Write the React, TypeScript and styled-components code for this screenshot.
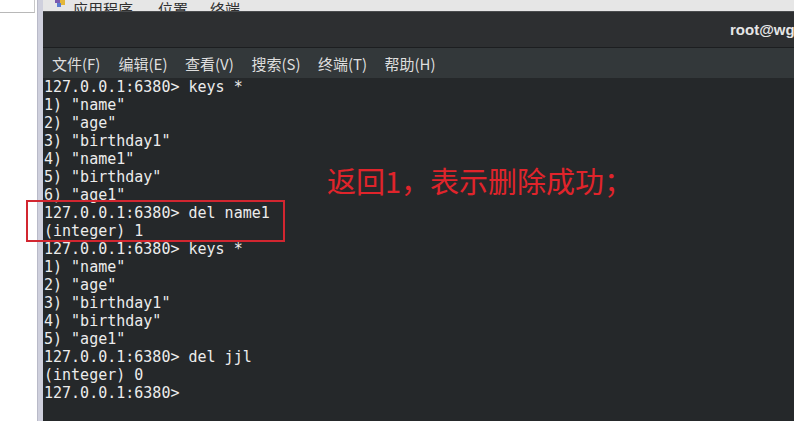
import { createGlobalStyle, styled } from "styled-components";

const lines = [
  "127.0.0.1:6380> keys *",
  '1) "name"',
  '2) "age"',
  '3) "birthday1"',
  '4) "name1"',
  '5) "birthday"',
  '6) "age1"',
  "127.0.0.1:6380> del name1",
  "(integer) 1",
  "127.0.0.1:6380> keys *",
  '1) "name"',
  '2) "age"',
  '3) "birthday1"',
  '4) "birthday"',
  '5) "age1"',
  "127.0.0.1:6380> del jjl",
  "(integer) 0",
  "127.0.0.1:6380>",
];

const menus = ["文件(F)", "编辑(E)", "查看(V)", "搜索(S)", "终端(T)", "帮助(H)"];
const topItems = [
  { label: "应用程序", gap: 25 },
  { label: "位置", gap: 22 },
  { label: "终端", gap: 0 },
];

const App = () => {
  return (
    <>
      <GlobalStyle />
      <Screen>
        <SidePanel>
          <SideField />
        </SidePanel>
        <Divider />
        <Main>
          <TopBar>
            <AppIcon width="12" height="10" viewBox="0 0 12 10">
              <rect x="1" y="0" width="5" height="5" fill="#7a5bb0" />
              <rect x="6" y="2" width="5" height="5" fill="#e3b73a" />
              <rect x="3" y="5" width="4" height="4" fill="#5b7bd0" />
            </AppIcon>
            {topItems.map((t) => (
              <TopItem key={t.label} gap={t.gap}>
                {t.label}
              </TopItem>
            ))}
          </TopBar>
          <TitleBar>
            <Title>root@wg:~</Title>
          </TitleBar>
          <MenuBar>
            {menus.map((m) => (
              <MenuItem key={m}>{m}</MenuItem>
            ))}
          </MenuBar>
          <Terminal>
            {lines.map((l, i) => (
              <Line key={i}>{l}</Line>
            ))}
          </Terminal>
        </Main>
        <Highlight />
        <Note>返回1，表示删除成功；</Note>
      </Screen>
    </>
  );
};

export default App;

const GlobalStyle = createGlobalStyle`
  html, body {
    margin: 0;
    padding: 0;
    background: #ffffff;
    overflow: hidden;
  }
`;

const Screen = styled.div`
  width: 794px;
  height: 421px;
  display: flex;
  position: relative;
  overflow: hidden;
`;

const SidePanel = styled.div`
  width: 37px;
  background: #ffffff;
  display: flex;
  flex-direction: column;
`;

const SideField = styled.div`
  height: 12px;
  margin-right: 2px;
  border-bottom: 1px solid #b8b8b8;
  border-right: 1px solid #c8c8c8;
`;

const Divider = styled.div`
  width: 6px;
  background: #cfd0dd;
  border-left: 1px solid #b9bac8;
  box-sizing: border-box;
`;

const Main = styled.div`
  flex: 1;
  display: flex;
  flex-direction: column;
  min-width: 0;
`;

const TopBar = styled.div`
  height: 11px;
  background: #e6e6e6;
  border-bottom: 1px solid #4a4c4e;
  display: flex;
  align-items: flex-end;
  overflow: hidden;
  padding-left: 11px;
  font-family: "Noto Sans CJK SC", sans-serif;
  font-size: 15px;
  color: #303030;
`;

const AppIcon = styled.svg`
  margin-bottom: 3px;
  margin-right: 7px;
`;

const TopItem = styled.span<{ gap: number }>`
  line-height: 16px;
  margin-bottom: -6px;
  margin-right: ${(p) => p.gap}px;
  white-space: nowrap;
`;

const TitleBar = styled.div`
  height: 35px;
  background: #2d2f31;
  display: flex;
  align-items: center;
  padding-left: 687px;
  overflow: hidden;
  border-bottom: 1px solid #1c1e20;
`;

const Title = styled.span`
  font-family: "Liberation Sans", Arial, sans-serif;
  font-size: 15px;
  font-weight: bold;
  color: #e6e6e6;
  white-space: nowrap;
`;

const MenuBar = styled.div`
  height: 30px;
  background: #33383a;
  display: flex;
  align-items: center;
  padding-left: 9px;
  gap: 17px;
  font-family: "Noto Sans CJK SC", sans-serif;
  font-size: 15px;
  color: #dedede;
`;

const MenuItem = styled.span`
  white-space: nowrap;
  width: 49.5px;
`;

const Terminal = styled.div`
  flex: 1;
  background: #25282a;
  padding-left: 1px;
  font-family: "DejaVu Sans Mono", "Liberation Mono", monospace;
  font-size: 15px;
  line-height: 18px;
  color: #ececec;
`;

const Line = styled.div`
  white-space: pre;
  height: 18px;
`;

const Highlight = styled.div`
  position: absolute;
  left: 26px;
  top: 200px;
  width: 259px;
  height: 42px;
  box-sizing: border-box;
  border: 2px solid #d22630;
`;

const Note = styled.div`
  position: absolute;
  left: 327px;
  top: 160px;
  font-family: "Noto Sans CJK SC", sans-serif;
  font-size: 29px;
  line-height: 40px;
  color: #e0242b;
  white-space: nowrap;
`;
